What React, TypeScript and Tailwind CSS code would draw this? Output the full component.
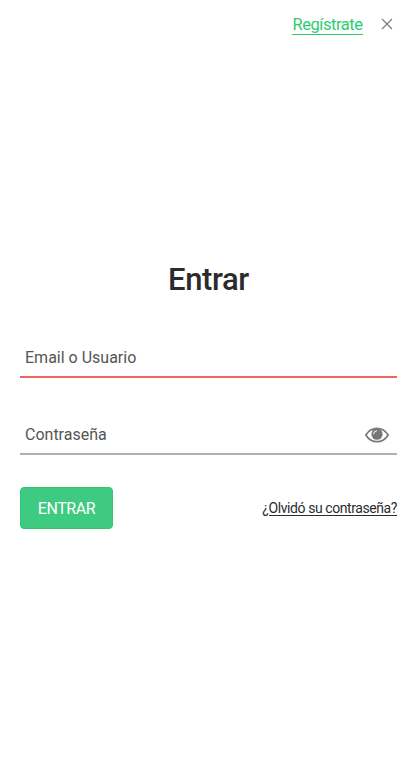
function Eye() {
  return (
    <svg viewBox="0 0 24 16" className="h-4 w-6" fill="none">
      <path d="M.8 8Q5 1.300 12 1.300Q19 1.300 23.200 8Q19 14.700 12 14.700Q5 14.700 .8 8Z" stroke="#7a7a7a" strokeWidth="1.700" strokeLinejoin="round" />
      <circle cx="12" cy="7.200" r="5.600" fill="#777" />
      <path d="M8.500 6.900Q8.600 4.100 11.500 3.800" stroke="#fff" strokeWidth="1" strokeLinecap="round" />
    </svg>
  );
}

export default function App() {
  return (
    <main className="flex h-[780px] w-[416px] flex-col bg-white font-['Roboto',sans-serif] text-[#2b2b2d]">
      <header className="flex h-12 items-start justify-end pr-[23px] pt-[14px]">
        <a href="#" className="flex h-[21px] w-[71px] justify-center whitespace-nowrap border-b border-b-[#2ecc71] text-[16.500px] leading-[21px] tracking-[-0.450px] text-[#2ecc71]">
          Regístrate
        </a>
        <button aria-label="Cerrar" className="ml-[18px] mt-[4px]">
          <svg viewBox="0 0 12 12" className="size-3" stroke="#777" strokeWidth="1.100">
            <path d="M1 1L11 11M11 1L1 11" />
          </svg>
        </button>
      </header>
      <form className="flex flex-col pl-5 pr-[19px] pt-[212px]">
        <h1 className="text-center text-[31px] font-medium leading-10 tracking-[-0.400px]">Entrar</h1>
        <div className="mt-9 flex h-[42px] items-center border-b-2 border-b-[#f2635f] px-[5px] pt-[3px] text-[16px] text-[#555]">
          Email o Usuario
        </div>
        <div className="mt-[35px] flex h-[42px] items-center justify-between border-b-2 border-b-[#b0b0b0] pl-[5px] pr-2 pt-[3px] text-[16px] text-[#555]">
          <span>Contraseña</span>
          <Eye />
        </div>
        <div className="mt-8 flex items-center justify-between">
          <button type="button" className="h-[42px] w-[93px] rounded-[4px] border border-[#2fc574] bg-[#3fca82] pt-px text-[16px] tracking-[-0.400px] text-white">
            ENTRAR
          </button>
          <a href="#" className="whitespace-nowrap text-[14px] tracking-[-0.420px] underline underline-offset-2">¿Olvidó su contraseña?</a>
        </div>
      </form>
    </main>
  );
}
